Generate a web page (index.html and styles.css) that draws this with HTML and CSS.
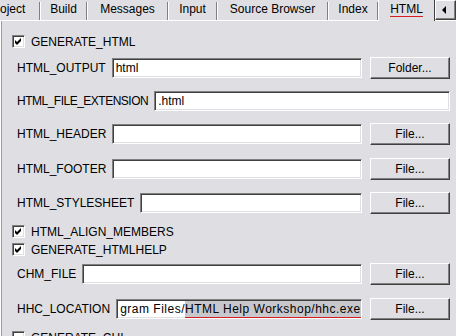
FILE: index.html
```html
<!DOCTYPE html>
<html lang="en">
<head>
    <meta charset="UTF-8">
    <title>HTML options</title>
    <link rel="stylesheet" href="styles.css">
</head>
<body>
    <!-- Tab strip -->
    <div class="tabs">
        <div class="tab cut">oject</div>
        <div class="tab">Build</div>
        <div class="tab">Messages</div>
        <div class="tab">Input</div>
        <div class="tab">Source Browser</div>
        <div class="tab">Index</div>
        <div class="tab active"><span class="mark">HTML</span></div>
        <div class="scroll-btn"><span class="arrow-left"></span></div>
    </div>

    <!-- HTML page -->
    <div class="panel">
        <div class="check-row">
            <span class="box"><svg width="7" height="7" viewBox="0 0 7 7"><path d="M0 2 L2 4 L6 0 L6 3 L2 7 L0 5 Z" fill="#000"/></svg></span>
            <span>GENERATE_HTML</span>
        </div>

        <div class="row mt9">
            <span class="label">HTML_OUTPUT</span>
            <div class="field">html</div>
            <div class="btn">Folder...</div>
        </div>

        <div class="row">
            <span class="label tight">HTML_FILE_EXTENSION</span>
            <div class="field">.html</div>
        </div>

        <div class="row">
            <span class="label">HTML_HEADER</span>
            <div class="field"></div>
            <div class="btn">File...</div>
        </div>

        <div class="row mt13">
            <span class="label">HTML_FOOTER</span>
            <div class="field"></div>
            <div class="btn">File...</div>
        </div>

        <div class="row mt12">
            <span class="label">HTML_STYLESHEET</span>
            <div class="field"></div>
            <div class="btn">File...</div>
        </div>

        <div class="check-row mt11">
            <span class="box"><svg width="7" height="7" viewBox="0 0 7 7"><path d="M0 2 L2 4 L6 0 L6 3 L2 7 L0 5 Z" fill="#000"/></svg></span>
            <span>HTML_ALIGN_MEMBERS</span>
        </div>
        <div class="check-row mt5">
            <span class="box"><svg width="7" height="7" viewBox="0 0 7 7"><path d="M0 2 L2 4 L6 0 L6 3 L2 7 L0 5 Z" fill="#000"/></svg></span>
            <span>GENERATE_HTMLHELP</span>
        </div>

        <div class="row mt7">
            <span class="label">CHM_FILE</span>
            <div class="field"></div>
            <div class="btn">File...</div>
        </div>

        <div class="row mt13">
            <span class="label">HHC_LOCATION</span>
            <div class="field path"><span>gram Files/</span><span class="selected">HTML Help Workshop/hhc.exe</span></div>
            <div class="btn">File...</div>
        </div>

        <div class="check-row mt11">
            <span class="box"></span>
            <span>GENERATE_CHI</span>
        </div>
    </div>
</body>
</html>
```

FILE: styles.css
```css
* {
    box-sizing: border-box;
}

body {
    margin: 0;
    width: 456px;
    height: 336px;
    overflow: hidden;
    background: #dfdfe3;
    font-family: "Liberation Sans", Arial, sans-serif;
    font-size: 12px;
    color: #000;
}

/* Tab strip */
.tabs {
    display: grid;
    grid-template-columns: 40px 47px 81px 49px 111px 50px 60px 18px;
    height: 21px;
    border-bottom: 1px solid #fff;
}

.tab {
    height: 18px;
    margin-top: 2px;
    padding-top: 1px;
    line-height: 12px;
    text-align: center;
    white-space: nowrap;
    overflow: hidden;
    border-left: 1px solid #fff;
    border-right: 1px solid #808080;
}

.tab.cut {
    text-align: left;
    padding-left: 0;
    border-left: none;
}

.tab.active {
    position: relative;
    height: 21px;
    margin-top: 0;
    margin-right: 3px;
    padding-top: 3px;
    background: #dfdfe3;
    border-right-color: #404040;
}

.mark {
    display: inline-block;
    border-bottom: 1px solid #d42020;
    padding-bottom: 1px;
}

.scroll-btn {
    height: 20px;
    margin-left: -3px;
    display: flex;
    align-items: center;
    justify-content: center;
    border: 1px solid;
    border-color: #fff #404040 #404040 #fff;
    box-shadow: inset -1px -1px #808080;
}

.arrow-left {
    width: 0;
    height: 0;
    margin-right: 3px;
    border-top: 4px solid transparent;
    border-bottom: 4px solid transparent;
    border-right: 4px solid #000;
}

/* Page body */
.panel {
    height: 315px;
    padding-top: 14px;
    border-left: 1px solid #fff;
    box-shadow: inset 1px 0 #9c9ca0;
}

.check-row {
    display: flex;
    align-items: center;
    height: 13px;
    padding-left: 11px;
    gap: 6px;
}

.box {
    width: 13px;
    height: 13px;
    display: flex;
    align-items: center;
    justify-content: center;
    background: #fff;
    border: 1px solid;
    border-color: #808080 #fff #fff #808080;
    box-shadow: inset 1px 1px #404040, inset -1px -1px #dfdfe3;
}

.row {
    display: flex;
    align-items: center;
    height: 22px;
    margin-top: 11px;
    padding: 0 6px 0 16px;
}

.label {
    white-space: nowrap;
    margin-right: 6px;
}

.label.tight {
    letter-spacing: -0.5px;
}

.field {
    flex: 1;
    height: 20px;
    padding: 0 2px 0 3px;
    line-height: 18px;
    white-space: nowrap;
    overflow: hidden;
    background: #fff;
    border: 1px solid;
    border-color: #808080 #fff #fff #808080;
    box-shadow: inset 1px 1px #404040, inset -1px -1px #dfdfe3;
}

.field.path {
    display: flex;
    letter-spacing: 0.5px;
}

.selected {
    background: #c8c8cc;
    line-height: 16px;
    margin-top: 1px;
    border-bottom: 1px solid #d42020;
    height: 17px;
}

.btn {
    width: 80px;
    height: 22px;
    margin-left: 8px;
    display: flex;
    align-items: center;
    justify-content: center;
    border: 1px solid;
    border-color: #fff #404040 #404040 #fff;
    box-shadow: inset -1px -1px #808080;
}

.mt5 { margin-top: 5px; }
.mt7 { margin-top: 7px; }
.mt9 { margin-top: 9px; }
.mt11 { margin-top: 11px; }
.mt12 { margin-top: 12px; }
.mt13 { margin-top: 13px; }
```
